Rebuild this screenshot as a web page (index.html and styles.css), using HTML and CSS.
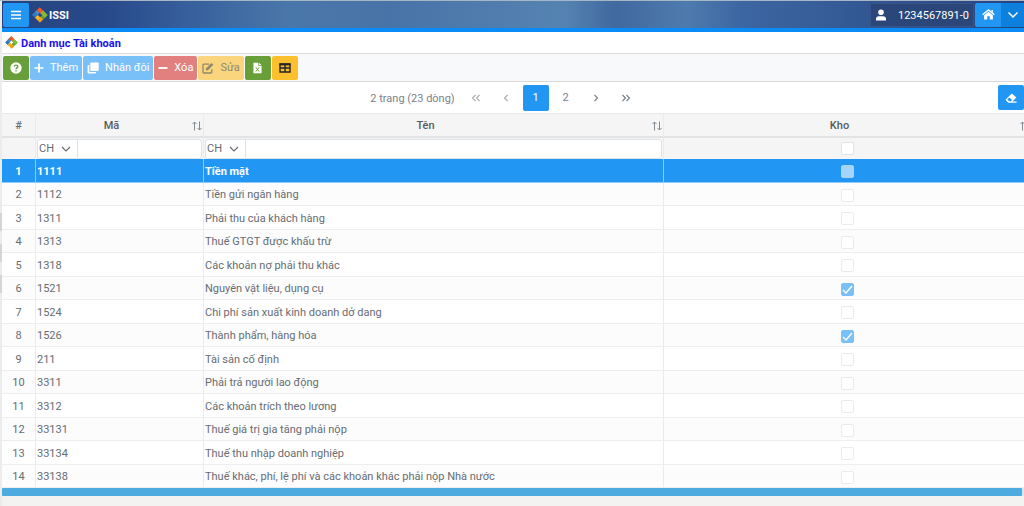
FILE: index.html
```html
<!DOCTYPE html>
<html lang="vi">
<head>
<meta charset="utf-8">
<meta name="viewport" content="width=device-width, initial-scale=1">
<title>Danh mục Tài khoản</title>
<link rel="stylesheet" href="styles.css">
</head>
<body>
<svg class="defs" aria-hidden="true">
  <symbol id="logo" viewBox="0 0 16 16">
    <g fill="none" stroke-width="3.8">
      <path d="M4.2 6.4L8.9 1.7" stroke="#d9432f"/>
      <path d="M6.6 1.8L11.4 6.6" stroke="#f0592b"/>
      <path d="M6.2 4.6L1.6 9.2" stroke="#3f8fd0"/>
      <path d="M1.7 6.7L6 11" stroke="#2f79bb"/>
      <path d="M4.4 9.4L9.2 14.2" stroke="#f9b81c"/>
      <path d="M14.2 6.8L9.4 11.6" stroke="#5fa233"/>
      <path d="M9.8 4.8L14.3 9.3" stroke="#86b93a"/>
      <path d="M9.8 11.2L7 14" stroke="#f39a1e"/>
    </g>
  </symbol>
  <symbol id="sort" viewBox="0 0 10 10">
    <path d="M2.5 9.5V1M0.5 3L2.5 1L4.5 3M7.5 0.5V9M5.5 7L7.5 9L9.5 7" fill="none" stroke="currentColor"/>
  </symbol>
</svg>
<div class="app">
  <aside class="rail"><span></span><span></span><span></span></aside>
  <div class="main">
    <header class="topbar">
      <button class="menu" aria-label="Menu"><svg viewBox="0 0 12 10" width="12" height="10"><path d="M1 1.5H11M1 5H11M1 8.5H11" stroke="currentColor" stroke-width="1.4"/></svg></button>
      <a class="brand" href="#"><svg width="16" height="16"><use href="#logo"/></svg><span>ISSI</span></a>
      <button class="user"><svg viewBox="0 0 12 12" width="12" height="12"><circle cx="6" cy="3.3" r="2.8" fill="currentColor"/><path d="M1 11.5V10Q1 7.2 4 7.2H8Q11 7.2 11 10V11.5Z" fill="currentColor"/></svg><span>1234567891-0</span></button>
      <button class="home" aria-label="Trang chủ"><svg viewBox="0 0 14 12" width="13" height="11"><path d="M0.6 6.3L7 1L13.4 6.3M11 1V4" fill="none" stroke="currentColor" stroke-width="1.5"/><path d="M2.2 6.8L7 3L11.8 6.8V11.5H8.4V8H5.6V11.5H2.2Z" fill="currentColor"/></svg></button>
      <button class="more" aria-label="Mở rộng"><svg viewBox="0 0 12 8" width="12" height="8"><path d="M1.5 1.5L6 6L10.5 1.5" fill="none" stroke="currentColor" stroke-width="1.5"/></svg></button>
    </header>
    <div class="title"><svg width="13" height="13"><use href="#logo"/></svg><h1>Danh mục Tài khoản</h1></div>
    <div class="toolbar">
      <button class="btn green" aria-label="Trợ giúp"><svg viewBox="0 0 12 12" width="12" height="12"><circle cx="6" cy="6" r="5.7" fill="#fff"/><path d="M4.2 4.7Q4.4 3.1 6 3.1Q7.8 3.1 7.8 4.6Q7.8 5.5 6.8 6Q6 6.4 6 7.2M6 8.2V9.6" fill="none" stroke="#689f38" stroke-width="1.4"/></svg></button>
      <button class="btn blue" disabled><svg viewBox="0 0 10 10" width="10" height="10"><path d="M5 0.5V9.5M0.5 5H9.5" stroke="currentColor" stroke-width="1.7"/></svg>Thêm</button>
      <button class="btn blue" disabled><svg viewBox="0 0 12 12" width="12" height="12"><rect x="3.3" y="0.5" width="8.4" height="8.4" rx="1" fill="currentColor"/><path d="M2.3 3H1.6Q0.6 3 0.6 4V10.4Q0.6 11.5 1.6 11.5H8Q9 11.5 9 10.4V10H3.3Q2.3 10 2.3 9Z" fill="currentColor"/></svg>Nhân đôi</button>
      <button class="btn red" disabled><svg viewBox="0 0 10 10" width="10" height="10"><path d="M0.5 5H9.5" stroke="currentColor" stroke-width="1.8"/></svg>Xóa</button>
      <button class="btn amber-off" disabled><svg viewBox="0 0 12 12" width="12" height="12"><path d="M7.3 2.2H1.8Q1 2.2 1 3V10.2Q1 11 1.8 11H9Q9.8 11 9.8 10.2V7.2" fill="none" stroke="currentColor" stroke-width="1.3"/><path d="M3.8 8.6L4.1 6.3L9.5 0.9L11.4 2.8L6 8.2Z" fill="currentColor"/></svg>Sửa</button>
      <button class="btn green" aria-label="Xuất Excel"><svg viewBox="0 0 10 12" width="9" height="12"><path d="M0.5 0.3H6V3.8H9.5V11.7H0.5Z M6.8 0.3L9.5 3H6.8Z" fill="#fff"/><path d="M3.1 5.2L6.9 10M6.9 5.2L3.1 10" stroke="#689f38" stroke-width="1.1"/></svg></button>
      <button class="btn amber" aria-label="Bảng"><svg viewBox="0 0 12 10" width="12" height="10"><path d="M1 1H11V9H1ZM1 5H11M6 1V9" fill="none" stroke="currentColor" stroke-width="1.4"/><path d="M0.5 0.5H11.5V2.4H0.5Z" fill="currentColor"/></svg></button>
    </div>
    <nav class="pager" aria-label="Phân trang">
      <span class="count">2 trang (23 dòng)</span>
      <button class="page off" aria-label="Trang đầu"><svg viewBox="0 0 10 8" width="10" height="8"><path d="M4.5 1L1.5 4L4.5 7M8.5 1L5.5 4L8.5 7"/></svg></button>
      <button class="page off" aria-label="Trang trước"><svg viewBox="0 0 6 8" width="6" height="8"><path d="M4.5 1L1.5 4L4.5 7"/></svg></button>
      <button class="page current">1</button>
      <button class="page">2</button>
      <button class="page" aria-label="Trang sau"><svg viewBox="0 0 6 8" width="6" height="8"><path d="M1.5 1L4.5 4L1.5 7"/></svg></button>
      <button class="page" aria-label="Trang cuối"><svg viewBox="0 0 10 8" width="10" height="8"><path d="M1.5 1L4.5 4L1.5 7M5.5 1L8.5 4L5.5 7"/></svg></button>
      <button class="clear" aria-label="Xóa bộ lọc"><svg viewBox="0 0 12 10" width="12" height="10"><path d="M6.8 0.4L11.4 4.6L7.4 8.4H11.6V9.7H3.2L0.5 6.8Z" fill="currentColor"/><path d="M4.2 4.4L7 7L5.8 8.3H4L2.3 6.6Z" fill="#2196f3"/></svg></button>
    </nav>
    <div class="grid">
      <table>
        <colgroup><col class="c-no"><col class="c-code"><col class="c-name"><col></colgroup>
        <thead>
          <tr class="heads">
            <th>#</th>
            <th><div class="head"><span>Mã</span><svg width="10" height="10"><use href="#sort"/></svg></div></th>
            <th><div class="head"><span>Tên</span><svg width="10" height="10"><use href="#sort"/></svg></div></th>
            <th><div class="head"><span>Kho</span><svg width="10" height="10"><use href="#sort"/></svg></div></th>
          </tr>
          <tr class="filters">
            <td></td>
            <td><div class="filter"><select aria-label="Kiểu lọc mã"><option>CH</option></select><input type="text" aria-label="Lọc mã"></div></td>
            <td><div class="filter"><select aria-label="Kiểu lọc tên"><option>CH</option></select><input type="text" aria-label="Lọc tên"></div></td>
            <td class="mid"><input type="checkbox" aria-label="Lọc kho"></td>
          </tr>
        </thead>
        <tbody>
          <tr class="selected"><td>1</td><td>1111</td><td>Tiền mặt</td><td><input type="checkbox" aria-label="Kho 1111" disabled></td></tr>
          <tr><td>2</td><td>1112</td><td>Tiền gửi ngân hàng</td><td><input type="checkbox" aria-label="Kho 1112" disabled></td></tr>
          <tr><td>3</td><td>1311</td><td>Phải thu của khách hàng</td><td><input type="checkbox" aria-label="Kho 1311" disabled></td></tr>
          <tr><td>4</td><td>1313</td><td>Thuế GTGT được khấu trừ</td><td><input type="checkbox" aria-label="Kho 1313" disabled></td></tr>
          <tr><td>5</td><td>1318</td><td>Các khoản nợ phải thu khác</td><td><input type="checkbox" aria-label="Kho 1318" disabled></td></tr>
          <tr><td>6</td><td>1521</td><td>Nguyên vật liệu, dụng cụ</td><td><input type="checkbox" aria-label="Kho 1521" checked disabled></td></tr>
          <tr><td>7</td><td>1524</td><td>Chi phí sản xuất kinh doanh dở dang</td><td><input type="checkbox" aria-label="Kho 1524" disabled></td></tr>
          <tr><td>8</td><td>1526</td><td>Thành phẩm, hàng hóa</td><td><input type="checkbox" aria-label="Kho 1526" checked disabled></td></tr>
          <tr><td>9</td><td>211</td><td>Tài sản cố định</td><td><input type="checkbox" aria-label="Kho 211" disabled></td></tr>
          <tr><td>10</td><td>3311</td><td>Phải trả người lao động</td><td><input type="checkbox" aria-label="Kho 3311" disabled></td></tr>
          <tr><td>11</td><td>3312</td><td>Các khoản trích theo lương</td><td><input type="checkbox" aria-label="Kho 3312" disabled></td></tr>
          <tr><td>12</td><td>33131</td><td>Thuế giá trị gia tăng phải nộp</td><td><input type="checkbox" aria-label="Kho 33131" disabled></td></tr>
          <tr><td>13</td><td>33134</td><td>Thuế thu nhập doanh nghiệp</td><td><input type="checkbox" aria-label="Kho 33134" disabled></td></tr>
          <tr><td>14</td><td>33138</td><td>Thuế khác, phí, lệ phí và các khoản khác phải nộp Nhà nước</td><td><input type="checkbox" aria-label="Kho 33138" disabled></td></tr>
        </tbody>
      </table>
    </div>
    <div class="scroll"><div class="thumb"></div></div>
  </div>
</div>
</body>
</html>
```
FILE: styles.css
```css
* { box-sizing: border-box; }
body {
  margin: 0;
  background: #f3f3f2;
  color: #666c73;
  font: 11px/16px Roboto, "Open Sans", sans-serif;
}
button, input, select { margin: 0; padding: 0; border: 0; font: inherit; color: inherit; }
h1 { margin: 0; font: inherit; }
svg { display: block; flex: none; }
.defs { position: absolute; width: 0; height: 0; }

.app { display: flex; min-height: 100vh; border-top: 1px solid #a9b4c6; }
.rail { flex: none; width: 2px; padding-top: 212px; display: flex; flex-direction: column; gap: 13px; background: #ececec; }
.rail span { height: 18px; background: #d5d5d5; }
.main { flex: 1; min-width: 0; }

.topbar {
  display: flex;
  align-items: center;
  height: 31px;
  padding-left: 1px;
  border-bottom: 4px solid #0b8bf5;
  background: linear-gradient(90deg, #25447f 0%, #28498a 10%, #365f9b 18%, #4a77aa 28%, #4873a8 38%, #5583b1 55%, #40699f 60%, #4e7bae 67%, #3d67a2 72%, #345b96 82%, #264280 100%);
  color: #fff;
}
.topbar button { display: flex; align-items: center; justify-content: center; height: 24px; }
.topbar .menu { width: 26px; background: #2196f3; border-radius: 2px; }
.brand { display: flex; align-items: center; gap: 1px; margin-left: 3px; color: #fff; font-weight: 700; text-decoration: none; }
.topbar span, .title h1, .count { padding-top: 2px; }
.topbar .user { margin-left: auto; gap: 11px; width: 104px; background: #2b4679; border: 1px solid #37538a; border-radius: 2px; color: #fff; }
.topbar .home { width: 26px; margin-left: 1px; background: #2196f3; border-radius: 2px 0 0 2px; }
.topbar .more { width: 23px; background: #0d7fdc; }

.title { display: flex; align-items: center; gap: 3px; height: 22px; padding-left: 3px; background: #fff; border-bottom: 1px solid #dcdcdc; color: #1a10f0; font-weight: 700; }

.toolbar { display: flex; align-items: center; gap: 1px; height: 28px; padding-left: 1px; background: #f8f9fb; border-bottom: 1px solid #d8d8d8; }
.btn { display: flex; align-items: center; justify-content: center; gap: 6px; height: 24px; min-width: 26px; padding: 0 4px; border-radius: 2px; color: #fff; }
.green { background: #689f38; }
.blue { background: #7ac0f8; }
.red { background: #e28080; }
.amber-off { background: #fbd57e; color: #8e8870; }
.amber { background: #fbc02d; color: #212529; }

.pager { display: flex; align-items: center; justify-content: center; gap: 4px; height: 31px; padding-left: 13px; background: #fff; color: #7b828a; }
.count { margin-right: 4px; margin-left: auto; }
.page { display: flex; align-items: center; justify-content: center; width: 26px; height: 26px; border-radius: 2px; background: none; }
.page path { fill: none; stroke: currentColor; stroke-width: 1.2; }
.off { color: #a9aeb4; }
.current { background: #2196f3; color: #fff; }
.clear { display: flex; align-items: center; justify-content: center; width: 26px; height: 25px; margin-left: auto; background: #2196f3; border-radius: 2px; color: #fff; }

.grid { overflow: hidden; border-top: 1px solid #e6e8ea; background: #fff; }
table { width: calc(100% + 8px); table-layout: fixed; border-collapse: separate; border-spacing: 0; }
.c-no { width: 34px; }
.c-code { width: 168px; }
.c-name { width: 460px; }
th, td { padding: 2px 1px 0; border-right: 1px solid #e9ecef; text-align: left; vertical-align: middle; white-space: nowrap; }
th { height: 24px; background: #f5f5f5; border-bottom: 2px solid #e2e3e5; font-weight: 500; text-align: center; }
.head { display: flex; align-items: center; color: #555b62; }
.head span { flex: 1; }
.head svg { margin: 0 0 0 6px; color: #858b92; }
.filters td { height: 21px; padding: 0 1px; background: #f5f5f5; }
.filter { display: flex; height: 20px; background: #fff; border: 1px solid #dfe2e6; border-radius: 3px; }
select {
  appearance: none;
  width: 40px;
  padding-left: 1px;
  border-right: 1px solid #dfe2e6;
  background: url("data:image/svg+xml,%3Csvg xmlns='http://www.w3.org/2000/svg' width='10' height='6'%3E%3Cpath d='M1 1L5 5L9 1' fill='none' stroke='%23666c73' stroke-width='1.2'/%3E%3C/svg%3E") no-repeat right 6px center;
}
.filter input { flex: 1; min-width: 0; background: none; }

tbody td { height: 24px; border-bottom: 1px solid #eceef0; line-height: 16px; }
tbody tr:nth-child(even) td { height: 23px; background: #fcfcfc; }
tbody td:first-child { text-align: center; }
td:last-child { text-align: center; }
tbody .selected td { background: #2196f3; border-color: #8ecbf9; color: #fff; font-weight: 700; }
input[type="checkbox"] { appearance: none; display: block; width: 13px; height: 13px; margin: 0 auto; background: #fff; border: 1px solid #dfe2e6; border-radius: 2px; }
input[type="checkbox"]:disabled { border-color: #e9ebee; }
.selected input[type="checkbox"]:disabled { background: #a4d4fa; border-color: #a4d4fa; }
input[type="checkbox"]:checked {
  border-color: #7ac0f8;
  background: #7ac0f8 url("data:image/svg+xml,%3Csvg xmlns='http://www.w3.org/2000/svg' width='11' height='11'%3E%3Cpath d='M1 6L4 9L10 2' fill='none' stroke='white' stroke-width='1.3'/%3E%3C/svg%3E") center no-repeat;
}

.scroll { height: 8px; padding-right: 2px; background: #d8e8f2; }
.thumb { height: 8px; background: #4dabe0; border-radius: 1px; }
```
